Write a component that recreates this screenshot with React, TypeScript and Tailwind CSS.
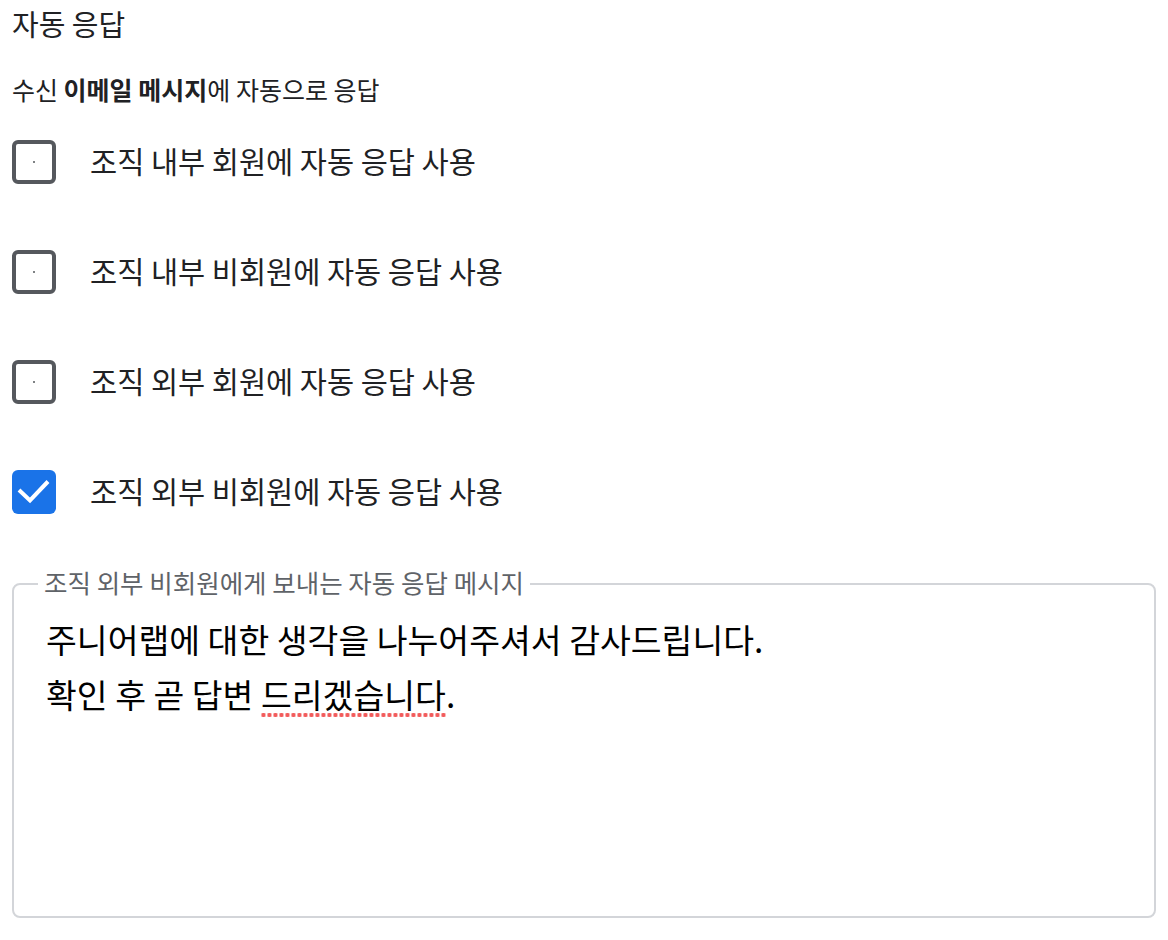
import React, { useState } from 'react';

const OPTIONS = [
  '조직 내부 회원에 자동 응답 사용',
  '조직 내부 비회원에 자동 응답 사용',
  '조직 외부 회원에 자동 응답 사용',
  '조직 외부 비회원에 자동 응답 사용',
];

const FONT = "font-['Noto_Sans_CJK_KR','Noto_Sans',sans-serif]";

const Checkbox = ({ checked, onClick }: { checked: boolean; onClick: () => void }) => (
  <button
    onClick={onClick}
    className={`w-[44px] h-[44px] shrink-0 rounded-[6px] flex items-center justify-center ${
      checked ? 'bg-[#1a73e8]' : 'bg-white border-[4px] border-[#55585d]'
    }`}
  >
    {checked ? (
      <svg width="44" height="44" viewBox="0 0 44 44" fill="none">
        <path d="M7 20 L18 30.5 L36 11.5" stroke="white" strokeWidth="4" strokeLinecap="butt" />
      </svg>
    ) : (
      <span className="w-[2px] h-[2px] rounded-full bg-[#55585d]" />
    )}
  </button>
);

const App = () => {
  const [checked, setChecked] = useState([false, false, false, true]);

  const toggle = (i: number) => setChecked((prev) => prev.map((v, j) => (j === i ? !v : v)));

  return (
    <div className={`${FONT} bg-white w-[1168px] min-h-[940px] px-[12px]`}>
      <h1 className="text-[29px] leading-[46px] text-[#202124]">자동 응답</h1>
      <p className="mt-[26px] text-[25px] leading-[34px] text-[#202124]">
        수신 <b className="font-bold">이메일 메시지</b>에 자동으로 응답
      </p>

      <div className="mt-[34px] flex flex-col gap-[66px]">
        {OPTIONS.map((label, i) => (
          <label key={label} className="flex items-center gap-[34px] cursor-pointer">
            <Checkbox checked={checked[i]} onClick={() => toggle(i)} />
            <span className="pb-[4px] text-[29.5px] leading-[40px] text-[#202124]">{label}</span>
          </label>
        ))}
      </div>

      <fieldset className="mt-[53px] h-[351px] border-2 border-[#d3d5d9] rounded-[8px]">
        <legend className="ml-[24px] px-[6px] pb-[4px] text-[25.5px] leading-[30px] text-[#5f6368]">
          조직 외부 비회원에게 보내는 자동 응답 메시지
        </legend>
        <div className="pt-[10px] pl-[32px] text-[33.5px] leading-[55px] text-black">
          <div>주니어랩에 대한 생각을 나누어주셔서 감사드립니다.</div>
          <div>
            확인 후 곧 답변{' '}
            <span className="bg-[radial-gradient(circle,#f25c5c_2px,transparent_2.4px)] bg-[length:6px_6px] bg-repeat-x bg-bottom">
              드리겠습니다
            </span>
            .
          </div>
        </div>
      </fieldset>
    </div>
  );
};

export default App;
